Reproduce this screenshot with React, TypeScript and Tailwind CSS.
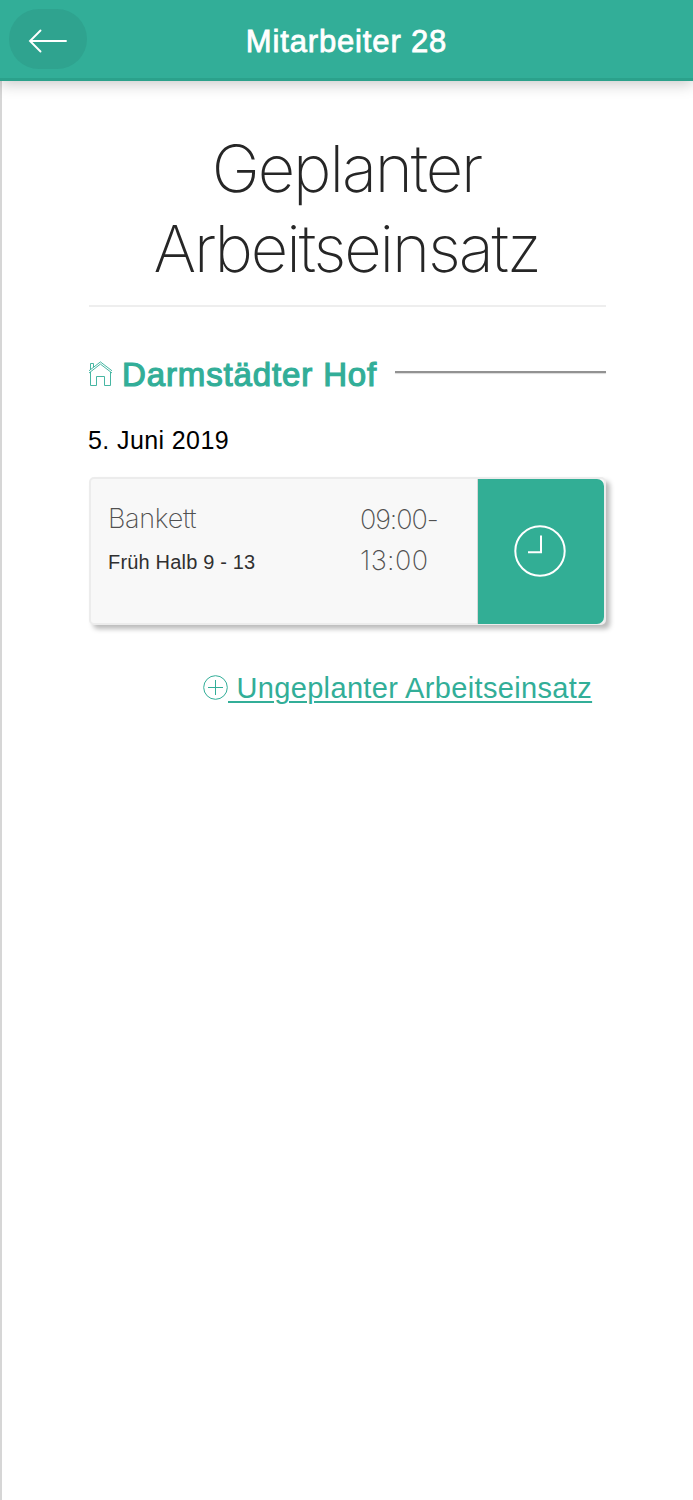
import React from "react";

function Header() {
  return (
    <header className="relative z-10 grid h-[81px] grid-cols-[87px_1fr_87px] items-start border-b-[3px] border-[#2ba18b] bg-[#32ae98] shadow-[0_3px_14px_rgba(0,0,0,0.22)]">
      <button
        type="button"
        aria-label="Zurück"
        className="ml-[9px] mt-[9px] flex h-[60px] w-[78px] items-center justify-center rounded-full bg-[#2fa38f]"
      >
        <svg width="40" height="26" viewBox="0 0 40 26" fill="none" stroke="white" strokeWidth="1.9" strokeLinecap="round" className="mt-[3px]">
          <path d="M2 13H38M12.5 2.5L2 13L12.5 23.5" />
        </svg>
      </button>
      <h2 className="whitespace-nowrap pt-[24px] text-center text-[31px] leading-[36px] tracking-[0.85px] text-white [-webkit-text-stroke:0.8px_white]">
        Mitarbeiter 28
      </h2>
    </header>
  );
}

function HomeIcon() {
  return (
    <svg width="25" height="26" viewBox="0 0 25 26" fill="none" stroke="#32ae98" strokeWidth="0.9" className="-ml-px -mt-[3px]">
      <path d="M1 9.8L12.4 0.9L24 9.8M1 12L12.4 3.1L24 12M2.5 8.6V2.5H5.5V6.3M2.5 11V24.5H8.5V15.5H16.5V24.5H22.5V11" />
    </svg>
  );
}

function ClockIcon() {
  return (
    <svg width="52" height="52" viewBox="0 0 52 52" fill="none" stroke="white" strokeWidth="2" className="-mt-px mr-[2px]">
      <circle cx="26" cy="26" r="24.7" />
      <path d="M27 10.5V27.3H14" />
    </svg>
  );
}

function PlusCircleIcon() {
  return (
    <svg width="25" height="25" viewBox="0 0 25 25" fill="none" stroke="#32ae98" strokeWidth="1" className="-mt-[3px]">
      <circle cx="12.5" cy="12.5" r="11.8" />
      <path d="M12.5 5V20M5 12.5H20" />
    </svg>
  );
}

function ShiftCard() {
  return (
    <article className="mt-[20px] flex h-[148px] w-[517px] rounded-[5px] border-2 border-[#ececec] bg-[#f8f8f8] shadow-[4px_4px_5px_rgba(0,0,0,0.27)]">
      <div className="flex-1 pl-[17px] pt-[20px]">
        <p className="font-[Inter,sans-serif] text-[27px] font-extralight leading-[40px] tracking-[-0.3px] text-[#505050]">Bankett</p>
        <p className="mt-[8px] text-[20px] leading-[30px] tracking-[0.18px] text-[#303030]">Früh Halb 9 - 13</p>
      </div>
      <p className="w-[117px] pt-[20px] font-[Inter,sans-serif] text-[27px] font-extralight leading-[41px] tracking-[-1.1px] text-[#505050]">
        09:00-
        <br />
        <span className="tracking-[0.4px]">13:00</span>
      </p>
      <button type="button" aria-label="Zeit erfassen" className="-mb-px flex w-[127px] items-center justify-center rounded-r-[7px] border-l border-[#d8d8d8] bg-[#32ae95]">
        <ClockIcon />
      </button>
    </article>
  );
}

export default function App() {
  return (
    <div className="flex min-h-[1500px] w-[693px] flex-col bg-white font-['Liberation_Sans',sans-serif]">
      <Header />
      <main className="flex-1 border-l-2 border-[#d6d6d6] pl-[87px] pr-[87px] pt-[48px]">
        <h1 className="border-b-2 border-[#eeeeee] pb-[16px] pr-[2px] text-center font-[Inter,sans-serif] text-[65px] font-extralight leading-[80px] tracking-[-2.1px] text-[#262626]">
          Geplanter
          <br />
          Arbeitseinsatz
        </h1>
        <section>
          <div className="mt-[48px] flex h-[40px] items-center">
            <HomeIcon />
            <h3 className="ml-[9px] whitespace-nowrap text-[33px] leading-[40px] tracking-[0.87px] text-[#32ae98] [-webkit-text-stroke:1.2px_#32ae98]">Darmstädter Hof</h3>
            <span className="-mt-[6px] ml-[18px] h-[2px] flex-1 bg-[#929292] shadow-[0_1px_1px_rgba(0,0,0,0.15)]" />
          </div>
          <p className="-ml-px mt-[28px] text-[25px] leading-[34px] tracking-[0.4px] text-black">5. Juni 2019</p>
          <ShiftCard />
        </section>
        <a href="#" className="ml-[114px] mt-[46px] flex h-[36px] items-center text-[29px] tracking-[0.35px] text-[#32ae98]">
          <PlusCircleIcon />
          <span className="whitespace-pre underline decoration-2 underline-offset-[3px]"> Ungeplanter Arbeitseinsatz</span>
        </a>
      </main>
    </div>
  );
}
